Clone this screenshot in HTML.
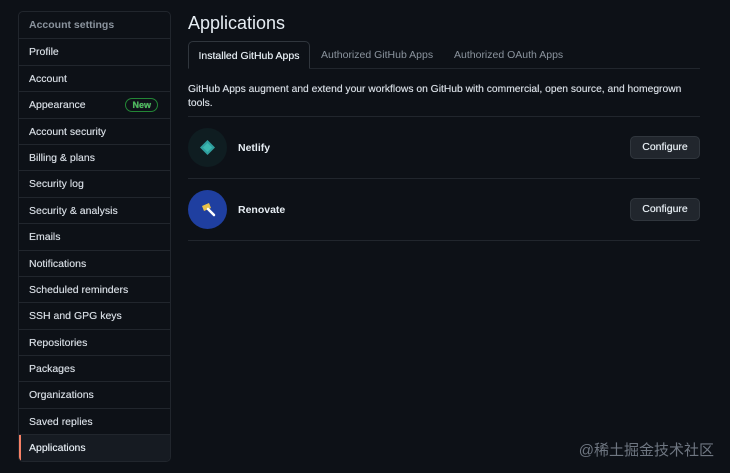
<!DOCTYPE html>
<html><head><meta charset="utf-8"><style>
*{box-sizing:border-box;margin:0;padding:0}
body{width:730px;height:473px;background:#0d1117;font-family:"Liberation Sans",sans-serif;color:#c9d1d9;position:relative;overflow:hidden;font-size:10.5px}
.side{position:absolute;left:18px;top:11px;width:153px;border:1px solid #21262d;border-radius:5px;overflow:hidden}
.side div{height:26.4px;line-height:26px;padding-left:10px;border-top:1px solid #21262d;color:#d5dbe2;position:relative;text-shadow:0 0 0.4px #d5dbe2}
.side div:first-child{border-top:none;color:#8b949e;font-weight:bold;text-shadow:none}
.side .act{background:#161b22;color:#e6edf3}
.side .act:before{content:"";position:absolute;left:0;top:0;bottom:0;width:2px;background:#f78166}
.new{position:absolute;right:12px;top:6px;height:14px;line-height:12px;border:1px solid #238636;color:#3fb950;border-radius:8px;padding:0 6px;font-size:9px;font-weight:bold}
h1{position:absolute;left:188px;top:13px;font-size:18px;font-weight:normal;color:#e6edf3}
.tabs{position:absolute;left:188px;top:41px;width:512px;height:28px;border-bottom:1px solid #21262d}
.tab{position:absolute;top:0;height:28px;line-height:28px;font-size:10.5px;color:#8b949e}
.tab.on{left:0;width:122px;border:1px solid #30363d;border-bottom:1px solid #0d1117;border-radius:5px 5px 0 0;background:#0d1117;color:#e6edf3;text-align:center;text-shadow:0 0 0.4px #e6edf3}
.desc{position:absolute;left:188px;top:83px;width:520px;line-height:14px;font-size:10.3px;color:#d5dbe2;text-shadow:0 0 0.4px #d5dbe2}
.hr{position:absolute;left:188px;width:512px;height:1px;background:#21262d}
.av{position:absolute;left:188px;width:39px;height:39px;border-radius:50%}
.name{position:absolute;left:238px;font-weight:bold;color:#e6edf3;font-size:10.5px}
.btn{position:absolute;left:630px;width:70px;height:23px;line-height:21px;text-align:center;border:1px solid #30363d;background:#21262d;border-radius:5px;color:#e6edf3;font-size:10.5px;text-shadow:0 0 0.5px #e6edf3}
.wm{position:absolute;right:16px;top:439px;font-family:"Liberation Sans","Noto Sans CJK SC",sans-serif;font-size:15px;color:#6e7681}
</style></head><body>
<div class="side">
<div>Account settings</div><div>Profile</div><div>Account</div><div>Appearance<span class="new">New</span></div><div>Account security</div><div>Billing &amp; plans</div><div>Security log</div><div>Security &amp; analysis</div><div>Emails</div><div>Notifications</div><div>Scheduled reminders</div><div>SSH and GPG keys</div><div>Repositories</div><div>Packages</div><div>Organizations</div><div>Saved replies</div><div class="act">Applications</div>
</div>
<h1>Applications</h1>
<div class="tabs">
<div class="tab on">Installed GitHub Apps</div>
<div class="tab" style="left:133px">Authorized GitHub Apps</div>
<div class="tab" style="left:266px">Authorized OAuth Apps</div>
</div>
<div class="desc">GitHub Apps augment and extend your workflows on GitHub with commercial, open source, and homegrown tools.</div>
<div class="hr" style="top:116px"></div>
<div class="av" style="top:128px;background:#0f1d21"><svg width="39" height="39"><polygon points="19.5,12 27,19.5 19.5,27 12,19.5" fill="#2f9e9e"/><polygon points="19.5,15 24,19.5 19.5,24 15,19.5" fill="#3bb8b0"/></svg></div>
<div class="name" style="top:142px">Netlify</div>
<div class="btn" style="top:136px">Configure</div>
<div class="hr" style="top:178px"></div>
<div class="av" style="top:190px;background:#1f3fa0"><svg width="39" height="39"><path d="M14 16 L21 13 L23 18 L16 21Z" fill="#e8c14a"/><path d="M20 19 L26 25" stroke="#fff" stroke-width="2.5" stroke-linecap="round"/></svg></div>
<div class="name" style="top:204px">Renovate</div>
<div class="btn" style="top:198px">Configure</div>
<div class="hr" style="top:240px"></div>
<div class="wm">@稀土掘金技术社区</div>
</body></html>
